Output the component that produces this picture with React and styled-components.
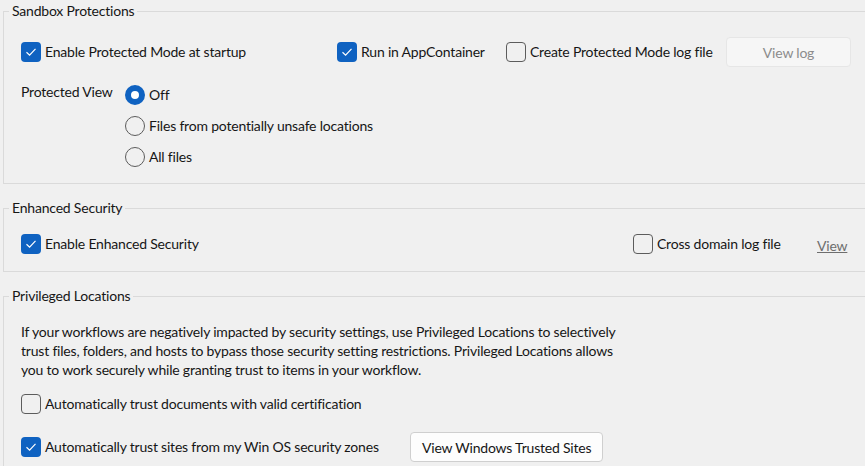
import styled, { createGlobalStyle } from 'styled-components';

const GlobalStyle = createGlobalStyle`
  html, body {
    margin: 0;
    padding: 0;
    background: #f0f0f0;
    overflow: hidden;
  }
  body {
    font-family: 'Lato', 'Liberation Sans', sans-serif;
    font-size: 14px;
    letter-spacing: -0.2px;
    color: #161616;
  }
`;

const Page = styled.div`
  width: 900px;
  padding: 1px 0 0 3px;
  display: flex;
  flex-direction: column;
  gap: 14px;
`;

const Group = styled.fieldset`
  margin: 0;
  padding: ${(props) => props.$padding || '0 0 16px 17px'};
  border: 1px solid #dadada;
  border-right: none;
  min-width: 0;
`;

const Legend = styled.legend`
  margin-left: -12px;
  padding: 0 3px;
  line-height: 20px;
`;

const Row = styled.div`
  display: flex;
  align-items: center;
  margin-top: ${(props) => props.$top || 0}px;
`;

const Cell = styled.div`
  width: ${(props) => (props.$width ? `${props.$width}px` : 'auto')};
  flex: none;
  display: flex;
  align-items: center;
`;

const Label = styled.label`
  display: flex;
  align-items: center;
  gap: 4px;
  white-space: nowrap;
  line-height: 20px;
`;

const Box = styled.span`
  width: 20px;
  height: 20px;
  box-sizing: border-box;
  border-radius: 4px;
  flex: none;
  display: flex;
  align-items: center;
  justify-content: center;
  background: ${(props) => (props.$checked ? '#0f62c1' : 'transparent')};
  border: ${(props) => (props.$checked ? 'none' : '1.5px solid #5c5c5c')};
`;

const Radio = styled.span`
  width: 20px;
  height: 20px;
  box-sizing: border-box;
  border-radius: 50%;
  flex: none;
  border: ${(props) => (props.$checked ? '6.5px solid #0f62c1' : '1.5px solid #5c5c5c')};
  background: ${(props) => (props.$checked ? '#fff' : 'transparent')};
`;

const ViewSection = styled.div`
  display: flex;
  margin-top: 13px;
`;

const ViewLabel = styled.div`
  width: 104px;
  line-height: 20px;
  margin-top: 2px;
`;

const RadioList = styled.div`
  display: flex;
  flex-direction: column;
  gap: 11px;
  margin-top: 5px;
`;

const Button = styled.button`
  font: inherit;
  letter-spacing: inherit;
  height: 30px;
  padding: 0 11px;
  border-radius: 4px;
  border: 1px solid ${(props) => (props.disabled ? '#e6e6e6' : '#cfcfcf')};
  background: ${(props) => (props.disabled ? '#f6f6f6' : '#fdfdfd')};
  color: ${(props) => (props.disabled ? '#8c8c8c' : '#161616')};
  width: ${(props) => (props.$width ? `${props.$width}px` : 'auto')};
`;

const LinkText = styled.span`
  color: #6e6e6e;
  text-decoration: underline;
  margin-top: 2px;
`;

const Paragraph = styled.p`
  margin: 16px 0 0 0;
  width: 610px;
  line-height: 19px;
`;

function Check({ checked }) {
  return (
    <Box $checked={checked}>
      {checked && (
        <svg width="12" height="10" viewBox="0 0 12 10">
          <path d="M1.5 5.2 L4.6 8.2 L10.5 1.8" fill="none" stroke="#fff" strokeWidth="1.2" />
        </svg>
      )}
    </Box>
  );
}

function CheckItem({ checked, children }) {
  return (
    <Label>
      <Check checked={checked} />
      <span>{children}</span>
    </Label>
  );
}

function RadioItem({ checked, children }) {
  return (
    <Label>
      <Radio $checked={checked} />
      <span>{children}</span>
    </Label>
  );
}

export default function App() {
  return (
    <>
      <GlobalStyle />
      <Page>
        <Group>
          <Legend>Sandbox Protections</Legend>
          <Row $top={16}>
            <Cell $width={316}>
              <CheckItem checked>Enable Protected Mode at startup</CheckItem>
            </Cell>
            <Cell $width={169}>
              <CheckItem checked>Run in AppContainer</CheckItem>
            </Cell>
            <Cell $width={220}>
              <CheckItem>Create Protected Mode log file</CheckItem>
            </Cell>
            <Button disabled $width={125}>View log</Button>
          </Row>
          <ViewSection>
            <ViewLabel>Protected View</ViewLabel>
            <RadioList>
              <RadioItem checked>Off</RadioItem>
              <RadioItem>Files from potentially unsafe locations</RadioItem>
              <RadioItem>All files</RadioItem>
            </RadioList>
          </ViewSection>
        </Group>

        <Group $padding="0 0 17px 17px">
          <Legend>Enhanced Security</Legend>
          <Row $top={16}>
            <Cell $width={612}>
              <CheckItem checked>Enable Enhanced Security</CheckItem>
            </Cell>
            <Cell $width={184}>
              <CheckItem>Cross domain log file</CheckItem>
            </Cell>
            <LinkText>View</LinkText>
          </Row>
        </Group>

        <Group $padding="0 0 4px 17px">
          <Legend>Privileged Locations</Legend>
          <Paragraph>
            If your workflows are negatively impacted by security settings, use Privileged Locations to selectively
            trust files, folders, and hosts to bypass those security setting restrictions. Privileged Locations allows
            you to work securely while granting trust to items in your workflow.
          </Paragraph>
          <Row $top={15}>
            <CheckItem>Automatically trust documents with valid certification</CheckItem>
          </Row>
          <Row $top={18}>
            <Cell $width={389}>
              <CheckItem checked>Automatically trust sites from my Win OS security zones</CheckItem>
            </Cell>
            <Button>View Windows Trusted Sites</Button>
          </Row>
        </Group>
      </Page>
    </>
  );
}
